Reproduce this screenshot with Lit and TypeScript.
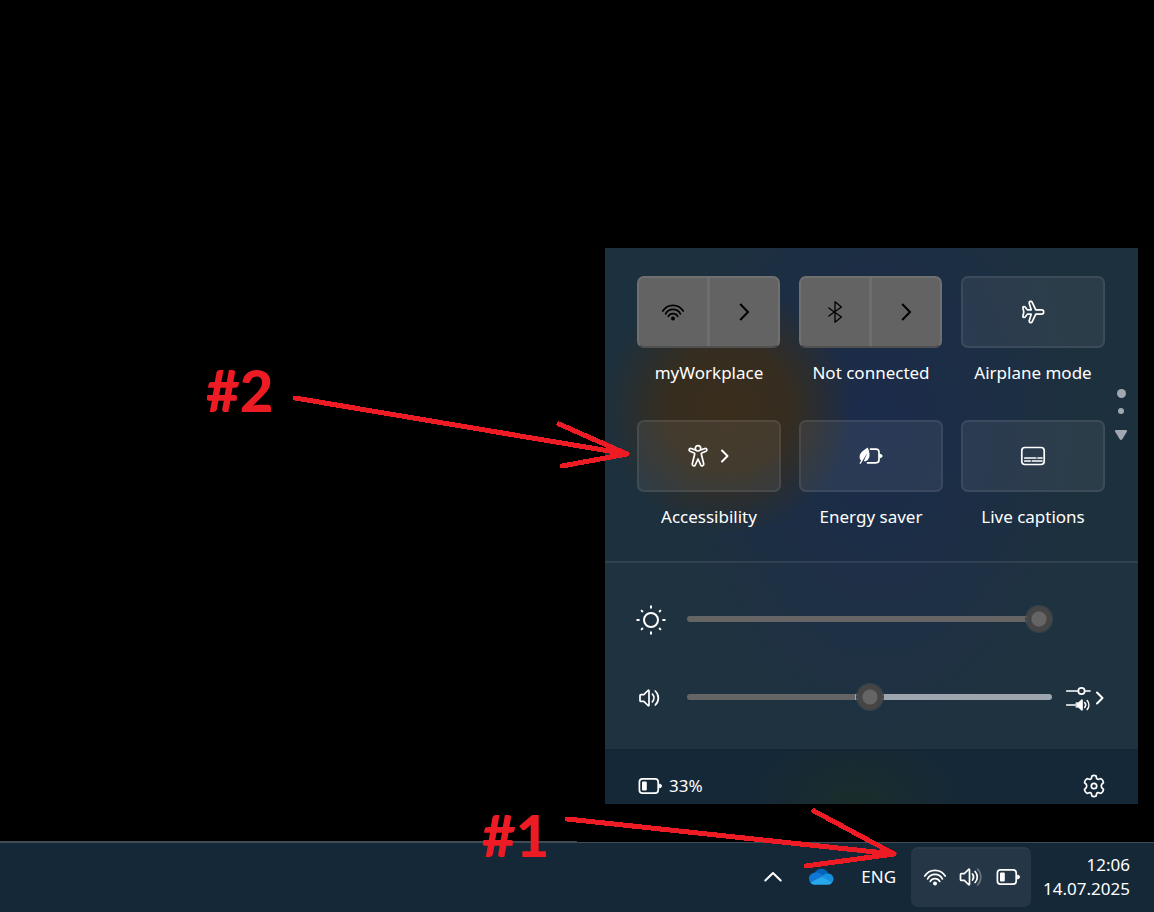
import { LitElement, html, css, svg, nothing } from "lit";
import { customElement, property, state } from "lit/decorators.js";

const speakerBody = svg`<path d="M3 9.600a1 1 0 0 1 1-1h2.800l4.200-4.100c.5-.5 1-.3 1 .4v14.200c0 .7-.5.900-1 .4l-4.200-4.100H4a1 1 0 0 1-1-1z"/>`;

const batteryBody = svg`
  <rect x="2.400" y="4.900" width="18.800" height="14.200" rx="3.200"/>
  <path d="M22.800 10.200c1.200 0 1.700.6 1.700 1.800s-.5 1.800-1.700 1.800z" fill="currentColor" stroke-width="1"/>
  <rect x="5" y="7.500" width="4.800" height="9" rx="1" fill="currentColor" stroke="none"/>`;

const icons: Record<string, unknown> = {
  wifi: svg`
    <path d="M1.800 11A12 12 0 0 1 22.200 11M4.600 13.900A8.300 8.300 0 0 1 19.400 13.900M7.300 16.400A5.400 5.400 0 0 1 16.700 16.400"/>
    <circle cx="12" cy="18.600" r="2" fill="currentColor" stroke="none"/>`,
  bluetooth: svg`<path stroke-width="1.300" d="M12 1.800V22.200L18.400 17 5.800 8M12 1.800L18.400 7 5.800 16"/>`,
  airplane: svg`<path d="M1.900 7.600c0-.6.3-.9.800-.9h.6c.4 0 .7.200 1 .5L6.300 9.800h3.900L8.200 3.200c-.4-1.900 2.100-2.600 2.900-1L14.800 9.800h5.700a2.200 2.200 0 0 1 0 4.400h-5.700L11.100 21.800c-.8 1.600-3.300.9-2.900-1l2-6.600H6.300l-2 2.600c-.3.3-.6.500-1 .5h-.6c-.5 0-.8-.3-.8-.9L2.800 12z"/>`,
  person: svg`
    <circle cx="12" cy="4.300" r="2.700"/>
    <path d="M9.300 5.900L5 4.500C3.200 4 2.300 6.400 4 7.200L8.200 9c.4.2.6.600.5 1L6.300 19.800c-.5 2 2.200 3 3 1.100L12 15l2.700 5.900c.8 1.900 3.500.9 3-1.100L15.300 10c-.1-.4.1-.8.5-1L20 7.200c1.700-.8.800-3.200-1-2.700l-4.300 1.400"/>`,
  energy: svg`
    <path d="M11.500 5.200H17a3 3 0 0 1 3 3v7.600a3 3 0 0 1-3 3H8.500"/>
    <path d="M21 10.300c1.400 0 2.100.6 2.100 1.700s-.7 1.700-2.100 1.700z" fill="currentColor" stroke-width=".8"/>
    <path d="M8.600 3.400C5 6 .6 8.500.6 13c0 1.600.6 2.800 1.600 3.600L.7 18.700c-.5.900.700 1.500 1.200.8L8.600 8.500 4.700 17.300c4.500.2 6.200-4 5.800-7.600C10.300 7.500 9.600 5.300 8.600 3.400z" fill="currentColor" stroke="none"/>`,
  captions: svg`
    <rect x=".8" y="3.500" width="22.400" height="17" rx="3.200"/>
    <path d="M3.800 14H14.800M17 14h4M3.800 17H9.200M11.400 17H21"/>`,
  sun: svg`
    <circle cx="12" cy="12" r="6"/>
    <path stroke-linecap="butt" d="M12-.4v2.600M12 21.800v2.600M-.4 12h2.600M21.800 12h2.600M3.500 3.500l1.600 1.600M18.900 18.900l1.600 1.600M3.500 20.500l1.600-1.600M18.900 5.100l1.600-1.600"/>`,
  volume: svg`${speakerBody}<path d="M15.400 8.200a5.600 5.600 0 0 1 0 7.600M18.300 5a9.600 9.600 0 0 1 0 14"/>`,
  volumeTray: svg`<g transform="translate(-1.500 0)">${speakerBody}<path d="M15 9a5 5 0 0 1 0 6M17.600 6.500a8 8 0 0 1 0 11"/><path opacity=".3" d="M20 4a11.300 11.300 0 0 1 0 16"/></g>`,
  mixer: svg`
    <path d="M.8 5H11.800M19 5H24M.8 19H9"/>
    <circle cx="15.500" cy="5" r="3.200"/>
    <path d="M10.300 16.800h2l3.400-3c.4-.3.700-.2.700.3v9.800c0 .5-.3.600-.7.300l-3.400-3h-2z" fill="currentColor" stroke-width=".8"/>
    <path d="M18.700 16.600a3.600 3.600 0 0 1 0 4.800M21.200 14.500a7 7 0 0 1 0 9" stroke-width="1.500"/>`,
  battery: batteryBody,
  gear: svg`
    <circle cx="12" cy="12" r="2.700"/>
    <path d="M9.900 2Q12 .8 14.100 2L14.600 4.400Q15.200 5.600 16.500 5.300L19 4.600Q21.300 6.100 21.500 8.600L19.700 10.400Q18.800 12 19.700 13.600L21.500 15.400Q21.300 17.900 19 19.400L16.500 18.700Q15.200 18.400 14.600 19.600L14.100 22Q12 23.200 9.900 22L9.400 19.600Q8.800 18.400 7.500 18.700L5 19.400Q2.700 17.900 2.500 15.400L4.300 13.600Q5.200 12 4.300 10.400L2.500 8.600Q2.700 6.100 5 4.600L7.500 5.300Q8.800 5.600 9.400 4.400Z"/>`,
  next: svg`<path stroke-width="2" stroke-linecap="butt" stroke-linejoin="miter" d="M8.200 4L16 12l-7.800 8"/>`,
  nextSmall: svg`<path stroke-width="2" d="M9 6.500L14.500 12 9 17.500"/>`,
  up: svg`<path stroke-width="2" d="M4.300 15.500L12 8l7.700 7.500"/>`,
  cloud: svg`
    <g stroke="none">
      <path fill="#0364b8" d="M5.500 8.500A7.400 7.400 0 0 1 19.300 8.500L14 14z"/>
      <path fill="#0f78d4" d="M6 7.600c2.200-.4 4.400.3 6 1.400l7.500 5L6 19.800A6 6 0 0 1 0 13.800C0 10.400 2.600 8 6 7.600z"/>
      <path fill="#1490df" d="M19.200 8.500A5.400 5.400 0 0 1 23 17.600L12.500 12C14 9.700 16.500 8.400 19.200 8.500z"/>
      <path fill="#28a8ea" d="M12.700 11.700L23.400 17.200A5 5 0 0 1 18.900 19.800H6a6 6 0 0 1-4.600-2.200z"/>
    </g>`,
};

@customElement("ui-icon")
class UiIcon extends LitElement {
  @property() name = "";

  static styles = css`
    :host {
      display: block;
      width: 24px;
      height: 24px;
      flex: none;
    }
    .glyph {
      display: block;
      width: 100%;
      height: 100%;
      overflow: visible;
    }
  `;

  render() {
    return html`<svg class="glyph" viewBox="0 0 24 24" fill="none" stroke="currentColor"
      stroke-width="1.700" stroke-linecap="round" stroke-linejoin="round" aria-hidden="true">${icons[this.name]}</svg>`;
  }
}

interface Tile {
  id: string;
  label: string;
  icon: string;
  kind: "split" | "menu" | "plain";
}

const tiles: Tile[] = [
  { id: "wifi", label: "myWorkplace", icon: "wifi", kind: "split" },
  { id: "bluetooth", label: "Not connected", icon: "bluetooth", kind: "split" },
  { id: "airplane", label: "Airplane mode", icon: "airplane", kind: "plain" },
  { id: "accessibility", label: "Accessibility", icon: "person", kind: "menu" },
  { id: "energy", label: "Energy saver", icon: "energy", kind: "plain" },
  { id: "captions", label: "Live captions", icon: "captions", kind: "plain" },
];

@customElement("quick-settings")
class QuickSettings extends LitElement {
  @state() private brightness = 100;
  @state() private volume = 50;

  static styles = css`
    :host {
      display: block;
      color: #fff;
      background:
        radial-gradient(circle 125px at 23% 29%, #3a2d1c 0%, #382d1de6 50%, #352d1f00 100%),
        radial-gradient(ellipse 200px 310px at 51% 32%, #1b2b4b 0%, #1b2c4900 100%),
        #1d303e;
    }
    button {
      font: inherit;
      color: inherit;
      background: none;
      border: 0;
      padding: 0;
      display: flex;
      align-items: center;
      justify-content: center;
    }
    .toggles {
      display: flex;
      padding: 28px 0 32px 32px;
      border-bottom: 2px solid #ffffff17;
    }
    .tiles {
      flex: 1;
      display: grid;
      grid-template-columns: repeat(3, 1fr);
      gap: 35px 18px;
    }
    .cell {
      display: flex;
      flex-direction: column;
      gap: 13px;
    }
    .name {
      text-align: center;
      line-height: 24px;
      white-space: nowrap;
    }
    .tile {
      box-sizing: border-box;
      height: 72px;
      border: 2px solid #ffffff14;
      border-radius: 7px;
      background: #ffffff11;
      gap: 9px;
      padding-right: 2px;
    }
    .plain {
      padding-right: 0;
    }
    .split {
      box-sizing: border-box;
      height: 72px;
      margin-right: 1px;
      display: grid;
      grid-template-columns: 71fr 68fr;
      border: 2px solid #707070;
      border-bottom-color: #505050;
      border-radius: 7px;
      background: #636363;
      color: #000;
    }
    .main {
      border-right: 3px solid #6e6e6e;
    }
    .narrow {
      width: 12px;
      display: flex;
      justify-content: center;
    }
    .pager {
      width: 32px;
      margin-right: 1px;
      display: flex;
      flex-direction: column;
      align-items: center;
      justify-content: center;
      padding-top: 24px;
      color: #a0a7af;
    }
    .dot {
      width: 9px;
      height: 9px;
      border-radius: 50%;
      background: currentColor;
    }
    .small {
      width: 6px;
      height: 6px;
      margin: 10px 0 16px;
    }
    .arrow {
      display: block;
      width: 12px;
      height: 10px;
    }
    .sliders {
      padding: 17px 32px 13px;
      background: #ffffff03;
    }
    .row {
      display: flex;
      align-items: center;
      height: 78px;
    }
    .lead {
      width: 28px;
      margin-right: 22px;
      padding-top: 2px;
    }
    .sun {
      width: 28px;
      height: 28px;
    }
    .range {
      --pos: calc(var(--value) * (100% - 26px) / 100 - 1px);
      appearance: none;
      flex: 1;
      min-width: 0;
      height: 26px;
      margin: 0;
      background: none;
      outline: none;
    }
    .range::-webkit-slider-runnable-track {
      height: 6px;
      border-radius: 3px;
      background: linear-gradient(to right, #656565 var(--pos), #9da6ae 0);
    }
    .range::-webkit-slider-thumb {
      appearance: none;
      width: 26px;
      height: 26px;
      margin-top: -10px;
      border: 0;
      border-radius: 50%;
      background: radial-gradient(circle, #656565 0 7px, #454545 8px);
      box-shadow: 0 0 0 1px #34424f;
    }
    .tail {
      width: 54px;
      display: flex;
      justify-content: space-between;
      box-sizing: border-box;
      padding: 2px 0 0 14px;
      align-items: center;
    }
    .footer {
      display: flex;
      justify-content: space-between;
      align-items: center;
      padding: 23px 32px 6px;
      border-top: 2px solid #142535;
      background: radial-gradient(ellipse 110px 80px at 47% 100%, #1a2d2b 0%, #1a2d2b00 100%), #152838;
    }
    .charge {
      gap: 8px;
      line-height: 24px;
    }
  `;

  private renderTile(tile: Tile) {
    if (tile.kind === "split") {
      return html`<div class="split" role="group" aria-labelledby=${tile.id}>
        <button class="main" aria-labelledby=${tile.id}><ui-icon name=${tile.icon}></ui-icon></button>
        <button aria-label="More"><ui-icon name="next"></ui-icon></button>
      </div>`;
    }
    return html`<button class="tile ${tile.kind}" aria-labelledby=${tile.id}>
      <ui-icon name=${tile.icon}></ui-icon>
      ${tile.kind === "menu" ? html`<span class="narrow"><ui-icon name="nextSmall"></ui-icon></span>` : nothing}
    </button>`;
  }

  private level(e: Event) {
    return Number((e.target as HTMLInputElement).value);
  }

  render() {
    return html`
      <section class="toggles">
        <div class="tiles">
          ${tiles.map((tile) => html`<div class="cell">
            ${this.renderTile(tile)}
            <span class="name" id=${tile.id}>${tile.label}</span>
          </div>`)}
        </div>
        <div class="pager">
          <span class="dot"></span>
          <span class="dot small"></span>
          <svg class="arrow" viewBox="0 0 12 10" aria-hidden="true">
            <path d="M1.200 0H10.800C12 0 12.300 1 11.700 1.900L7.400 9.100C6.700 10.300 5.300 10.300 4.600 9.100L.3 1.900C-.3 1 0 0 1.200 0Z" fill="currentColor"/>
          </svg>
        </div>
      </section>
      <section class="sliders">
        <div class="row">
          <label class="lead" for="brightness" aria-label="Brightness"><ui-icon class="sun" name="sun"></ui-icon></label>
          <input class="range" id="brightness" type="range" aria-label="Brightness" .value=${String(this.brightness)}
            style="--value:${this.brightness}" @input=${(e: Event) => (this.brightness = this.level(e))}>
          <span class="tail"></span>
        </div>
        <div class="row">
          <label class="lead" for="volume" aria-label="Volume"><ui-icon name="volume"></ui-icon></label>
          <input class="range" id="volume" type="range" aria-label="Volume" .value=${String(this.volume)}
            style="--value:${this.volume}" @input=${(e: Event) => (this.volume = this.level(e))}>
          <button class="tail" aria-label="Sound output">
            <ui-icon name="mixer"></ui-icon>
            <span class="narrow"><ui-icon name="nextSmall"></ui-icon></span>
          </button>
        </div>
      </section>
      <footer class="footer">
        <button class="charge"><ui-icon name="battery"></ui-icon>33%</button>
        <button aria-label="Settings"><ui-icon name="gear"></ui-icon></button>
      </footer>`;
  }
}

@customElement("task-bar")
class TaskBar extends LitElement {
  static styles = css`
    :host {
      display: flex;
      position: relative;
      justify-content: flex-end;
      align-items: center;
      box-sizing: border-box;
      padding: 4px 24px 5px;
      border-top: 1px solid #3f4b55;
      background: #152838;
      color: #fff;
      line-height: 24px;
    }
    .seam {
      position: absolute;
      top: -2px;
      left: 0;
      width: 50%;
      height: 1px;
      background: #3f4b55;
    }
    button {
      font: inherit;
      color: inherit;
      background: none;
      border: 0;
      padding: 0;
    }
    .chevron {
      margin-right: 24px;
    }
    .cloud {
      margin-right: 28px;
    }
    .lang {
      margin-right: 15px;
    }
    .tray {
      display: flex;
      align-items: center;
      box-sizing: border-box;
      height: 60px;
      gap: 12px;
      padding: 0 12px 2px;
      margin-right: 12px;
      border-radius: 7px;
      background: #253746;
      border-top: 2px solid #2c3c4a;
    }
    .clock {
      text-align: right;
    }
    .line {
      display: block;
    }
  `;

  render() {
    return html`
      <span class="seam"></span>
      <button class="chevron" aria-label="Show hidden icons"><ui-icon name="up"></ui-icon></button>
      <button class="cloud" aria-label="OneDrive"><ui-icon name="cloud"></ui-icon></button>
      <button class="lang">ENG</button>
      <button class="tray" aria-label="Network, volume and battery">
        <ui-icon name="wifi"></ui-icon>
        <ui-icon name="volumeTray"></ui-icon>
        <ui-icon name="battery"></ui-icon>
      </button>
      <button class="clock"><span class="line">12:06</span><span class="line">14.07.2025</span></button>`;
  }
}

@customElement("app-root")
class AppRoot extends LitElement {
  static styles = css`
    :host {
      display: flex;
      flex-direction: column;
      position: relative;
      min-height: 100vh;
      overflow: hidden;
      background: #000;
      font-family: "Noto Sans", "Open Sans", sans-serif;
      font-size: 17px;
    }
    .desktop {
      flex: 1;
      display: flex;
      justify-content: flex-end;
      align-items: flex-end;
      padding: 0 16px 38px;
    }
    .panel {
      flex: 0 1 533px;
    }
    .notes {
      position: absolute;
      right: 0;
      bottom: 0;
      width: 1154px;
      height: 912px;
      pointer-events: none;
      color: #ed1c24;
    }
    .arrows {
      display: block;
      width: 100%;
      height: 100%;
    }
    .mark {
      position: absolute;
      font: 900 58px/60px Lato, sans-serif;
    }
    .two {
      left: 206px;
      top: 360px;
    }
    .one {
      left: 482px;
      top: 805px;
    }
  `;

  render() {
    return html`
      <main class="desktop"><quick-settings class="panel"></quick-settings></main>
      <task-bar></task-bar>
      <div class="notes">
        <svg class="arrows" viewBox="0 0 1154 912" fill="none" stroke="currentColor" stroke-width="5"
          stroke-linecap="round" stroke-linejoin="round" shape-rendering="crispEdges" aria-hidden="true">
          <path d="M295 398L627 454M559 424L627 454L562 466"/>
          <path d="M567 819L894 854M814 811L894 854L806 866"/>
        </svg>
        <span class="mark two">#2</span>
        <span class="mark one">#1</span>
      </div>`;
  }
}
